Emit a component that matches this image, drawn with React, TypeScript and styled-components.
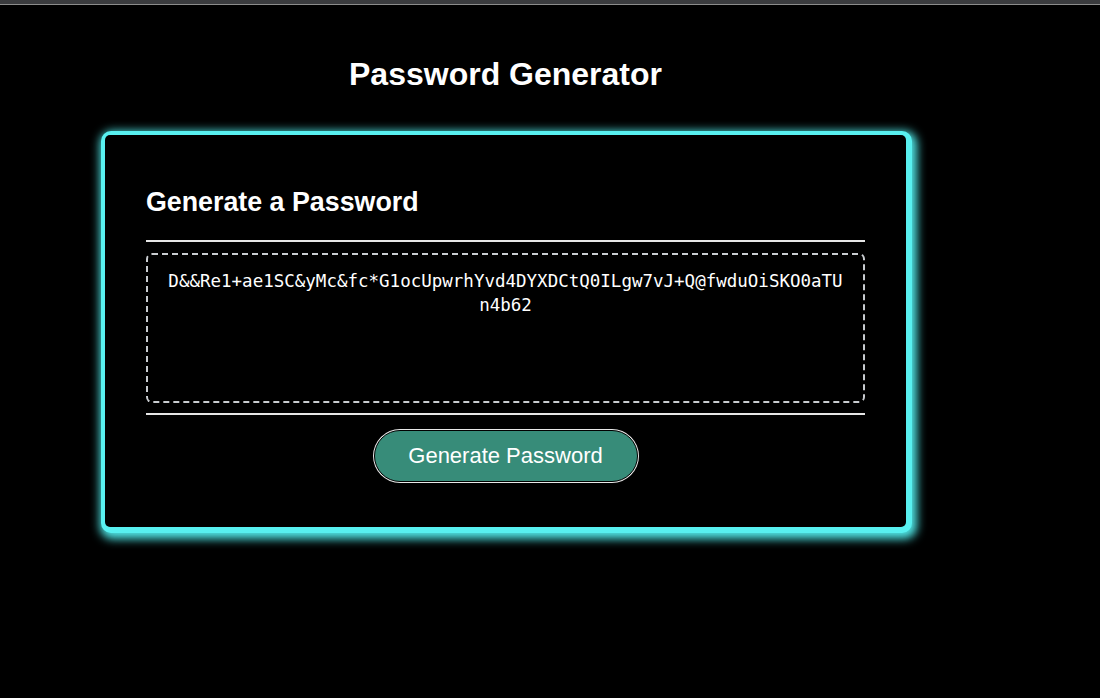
import React from "react";
import styled, { createGlobalStyle } from "styled-components";

const GlobalStyle = createGlobalStyle`
  html, body {
    margin: 0;
    padding: 0;
    background: #000;
    font-family: "Liberation Sans", Arial, sans-serif;
  }
  body { min-height: 100vh; }
  * { box-sizing: border-box; }
`;

const Page = styled.div`
  min-height: 698px;
  background: #000;
  display: flex;
  flex-direction: column;
`;

const TopBar = styled.div`
  height: 5px;
  background: #3a3b3e;
  border-bottom: 1px solid #8c8c8c;
`;

const Wrapper = styled.main`
  width: 801px;
  margin-left: 105px;
  padding-bottom: 60px;
  display: flex;
  flex-direction: column;
`;

const Title = styled.h1`
  margin: 51px 0 0;
  font-size: 32px;
  line-height: 36px;
  font-weight: 700;
  color: #fff;
  text-align: center;
`;

const Card = styled.section`
  margin-top: 43px;
  height: 392px;
  background: #000;
  border-radius: 5px;
  box-shadow: 1px 1px 0 5px #58f0f0, 3px 4px 10px 8px #4fe6e6;
  padding: 52px 41px 0 41px;
  display: flex;
  flex-direction: column;
`;

const CardHeader = styled.div`
  padding-bottom: 23px;
  border-bottom: 2px solid #e6e6e6;
`;

const Heading = styled.h2`
  margin: 0;
  font-size: 26.8px;
  line-height: 30px;
  font-weight: 700;
  color: #fff;
`;

const Body = styled.div`
  padding: 11px 0 10px;
`;

const Output = styled.textarea`
  display: block;
  width: 100%;
  height: 150px;
  resize: none;
  background: transparent;
  color: #fff;
  border: 2px dashed #c9ccd0;
  border-radius: 6px;
  padding: 14px 18px;
  font-family: "DejaVu Sans Mono", "Liberation Mono", monospace;
  font-size: 17.5px;
  line-height: 24px;
  text-align: center;
  word-break: break-all;
  outline: none;
  overflow: hidden;
`;

const CardFooter = styled.div`
  border-top: 2px solid #e6e6e6;
  padding-top: 15px;
  display: flex;
  justify-content: center;
`;

const GenerateButton = styled.button`
  width: 264px;
  height: 52px;
  border-radius: 27px;
  background: #378c79;
  border: 1px solid #000;
  box-shadow: 0 0 0 1px #e8e8e8;
  color: #fff;
  font-family: "Liberation Sans", Arial, sans-serif;
  font-size: 22px;
  cursor: pointer;
  display: flex;
  align-items: center;
  justify-content: center;
  padding: 0;
`;

export default function App() {
  const password =
    "D&&Re1+ae1SC&yMc&fc*G1ocUpwrhYvd4DYXDCtQ0ILgw7vJ+Q@fwduOiSKO0aTUn4b62";
  return (
    <Page>
      <GlobalStyle />
      <TopBar />
      <Wrapper>
        <Title>Password Generator</Title>
        <Card>
          <CardHeader>
            <Heading>Generate a Password</Heading>
          </CardHeader>
          <Body>
            <Output readOnly value={password} aria-label="Generated Password" />
          </Body>
          <CardFooter>
            <GenerateButton>Generate Password</GenerateButton>
          </CardFooter>
        </Card>
      </Wrapper>
    </Page>
  );
}
